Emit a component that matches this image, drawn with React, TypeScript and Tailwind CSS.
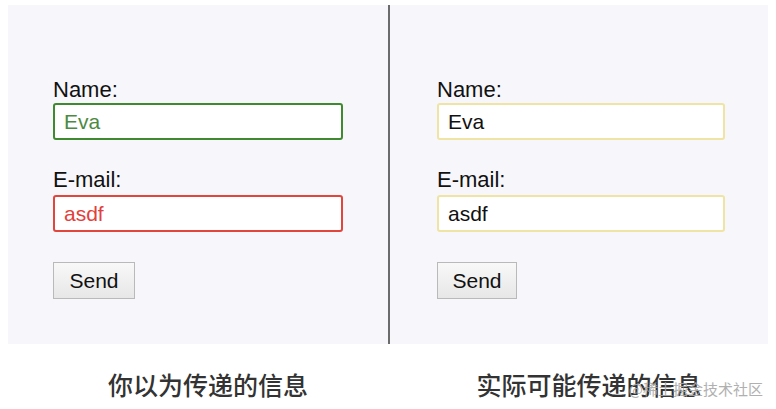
import React from "react";

type Field = {
  label: string;
  value: string;
  box: string;
  text: string;
};

const Panel = ({
  fields,
  className,
  inputWidth,
  buttonWidth,
}: {
  fields: Field[];
  className: string;
  inputWidth: string;
  buttonWidth: string;
}) => (
  <div className={"flex flex-col bg-[#f7f7fb] pt-[72px] " + className}>
    {fields.map((f, i) => (
      <div key={f.label} className={i === 0 ? "flex flex-col" : "mt-[27px] flex flex-col"}>
        <div className="text-[22px] leading-[25px] text-[#111]">{f.label}</div>
        <input
          readOnly
          value={f.value}
          className={
            "h-[37px] rounded-[3px] border-2 bg-white px-[9px] text-[21px] outline-none " +
            (i === 0 ? "mt-[1px] " : "mt-[3px] ") +
            inputWidth +
            " " +
            f.box +
            " " +
            f.text
          }
        />
      </div>
    ))}
    <button
      className={
        "mt-[30px] h-[37px] border border-[#b9b9b9] bg-linear-to-b from-[#f8f8f8] to-[#e7e7e7] text-[21px] text-[#111] " +
        buttonWidth
      }
    >
      Send
    </button>
  </div>
);

export default function App() {
  return (
    <div className="relative h-[409px] w-[776px] overflow-hidden bg-white font-['Liberation_Sans',Arial,sans-serif]">
      <div className="flex h-[344px] pl-2 pt-[5px]">
        <Panel
          className="w-[380px] pl-[45px]"
          inputWidth="w-[290px]"
          buttonWidth="w-[82px]"
          fields={[
            { label: "Name:", value: "Eva", box: "border-[#3f8a30]", text: "text-[#4d8a3f]" },
            { label: "E-mail:", value: "asdf", box: "border-[#e2453c]", text: "text-[#e2403a]" },
          ]}
        />
        <div className="w-[2px] bg-[#6b6b6b]" />
        <Panel
          className="w-[378px] pl-[47px]"
          inputWidth="w-[288px]"
          buttonWidth="w-[80px]"
          fields={[
            { label: "Name:", value: "Eva", box: "border-[#efe4a3]", text: "text-[#111]" },
            { label: "E-mail:", value: "asdf", box: "border-[#efe4a3]", text: "text-[#111]" },
          ]}
        />
      </div>

      <div className="mt-[28px] flex pl-2 font-['Noto_Sans_CJK_SC',sans-serif] text-[25px] font-medium leading-[25px] text-[#333]">
        <div className="w-[380px] pl-5 text-center">你以为传递的信息</div>
        <div className="w-[2px]" />
        <div className="w-[378px] pl-5 text-center">实际可能传递的信息</div>
      </div>

      {/* watermark */}
      <div className="absolute right-[13px] top-[380px] font-['Noto_Sans_CJK_SC',sans-serif] text-[15px] leading-[18px] text-[#a8a8a8] opacity-90">
        @稀土掘金技术社区
      </div>
    </div>
  );
}
